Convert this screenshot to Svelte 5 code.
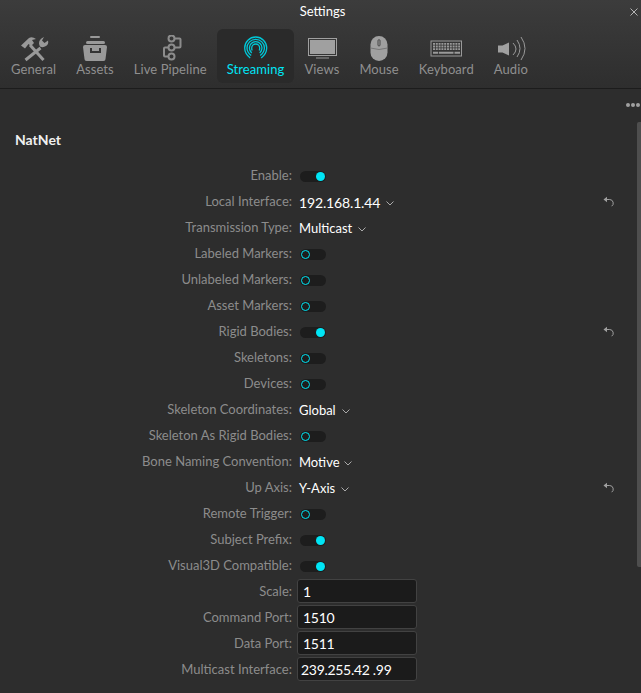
<script lang="ts">
	type Row = {
		label: string;
		kind: 'toggle' | 'select' | 'input';
		on?: boolean;
		value?: string;
		reset?: boolean;
		tight?: boolean;
		num?: boolean;
	};

	const tabs = ['General', 'Assets', 'Live Pipeline', 'Streaming', 'Views', 'Mouse', 'Keyboard', 'Audio'];
	const active = 'Streaming';

	const rows: Row[] = [
		{ label: 'Enable', kind: 'toggle', on: true },
		{ label: 'Local Interface', kind: 'select', value: '192.168.1.44', reset: true, num: true },
		{ label: 'Transmission Type', kind: 'select', value: 'Multicast' },
		{ label: 'Labeled Markers', kind: 'toggle' },
		{ label: 'Unlabeled Markers', kind: 'toggle' },
		{ label: 'Asset Markers', kind: 'toggle' },
		{ label: 'Rigid Bodies', kind: 'toggle', on: true, reset: true },
		{ label: 'Skeletons', kind: 'toggle' },
		{ label: 'Devices', kind: 'toggle' },
		{ label: 'Skeleton Coordinates', kind: 'select', value: 'Global' },
		{ label: 'Skeleton As Rigid Bodies', kind: 'toggle' },
		{ label: 'Bone Naming Convention', kind: 'select', value: 'Motive', tight: true },
		{ label: 'Up Axis', kind: 'select', value: 'Y-Axis', reset: true },
		{ label: 'Remote Trigger', kind: 'toggle' },
		{ label: 'Subject Prefix', kind: 'toggle', on: true },
		{ label: 'Visual3D Compatible', kind: 'toggle', on: true },
		{ label: 'Scale', kind: 'input', value: '1' },
		{ label: 'Command Port', kind: 'input', value: '1510' },
		{ label: 'Data Port', kind: 'input', value: '1511' },
		{ label: 'Multicast Interface', kind: 'input', value: '239.255.42 .99', tight: true }
	];
</script>

<div class="window">
	<header class="top">
		<div class="title">Settings</div>
		<svg class="close" width="8" height="8" viewBox="0 0 8 8" aria-hidden="true">
			<path d="M.5.500l7 7M7.500.500l-7 7" stroke="#b4b4b4" stroke-width="1" fill="none" />
		</svg>
		<nav class="tabs">
			{#each tabs as tab}
				<div class="tab" class:active={tab === active}>
					<svg class="icon" width="36" height="28" viewBox="0 0 36 28" aria-hidden="true">
						{#if tab === 'General'}
							<path d="M5 10.500L13 3q3-2 7 1l-4 1 2 3-3 3-2.500-2L9 13.500z" fill="#999" />
							<path d="M14 10l13.500 15" stroke="#999" stroke-width="3" fill="none" />
							<path d="M24.500 13L9.500 25" stroke="#999" stroke-width="3" fill="none" />
							<path d="M28 2l-2 3.500L28.500 8 32 5.500q1 3.500-2 5.500-3 2-6 .5-2-3.500 0-6.500 1.500-2 4-3z" fill="#999" />
						{:else if tab === 'Assets'}
							<rect x="13" y="1" width="10" height="2" rx="1" fill="#999" />
							<rect x="9" y="6" width="19" height="3" rx="1.500" fill="#999" />
							<path d="M8 10h20a2 2 0 0 1 2 2l-1.500 12a2 2 0 0 1-2 2h-17a2 2 0 0 1-2-2L6 12a2 2 0 0 1 2-2z" fill="#999" />
							<path d="M14 13v4h9v-4" stroke="#333" stroke-width="2" fill="none" />
						{:else if tab === 'Live Pipeline'}
							<g fill="none" stroke="#8c8c8c" stroke-width="2">
								<circle cx="19.500" cy="3.500" r="3" />
								<circle cx="19.500" cy="12.500" r="3" />
								<circle cx="19.500" cy="21.500" r="3" />
								<path d="M22.500 3.500h5a1 1 0 0 1 1 1v7a1 1 0 0 1-1 1h-5M16.500 12.500H13a1 1 0 0 0-1 1v7a1 1 0 0 0 1 1h3.500" />
							</g>
						{:else if tab === 'Streaming'}
							<g fill="none" stroke="#00c8d8" stroke-width="1.300" transform="translate(-.3 -1)">
								<path d="M12.500 24C10 22 7 19 7 14a11 11 0 0 1 22 0c0 5-3 8-5.500 10" />
								<path d="M13.500 21.500C11.500 20 9.300 18 9.300 14a8.700 8.700 0 0 1 17.400 0c0 4-2.200 6-4.200 7.500" />
								<path d="M14 19C13 18 11.700 16.500 11.700 14a6.300 6.300 0 0 1 12.600 0c0 2.500-1.300 4-2.300 5" />
								<path d="M14.500 16.500C14.200 16 14 15 14 14a4 4 0 0 1 8 0c0 1-.2 2-.5 2.500" />
							</g>
						{:else if tab === 'Views'}
							<rect x="4.500" y="3.500" width="28" height="17" fill="none" stroke="#a0a0a0" stroke-width="1" />
							<rect x="6" y="5" width="25" height="14" fill="#a0a0a0" />
							<rect x="12" y="22.500" width="13" height="1" fill="#999" />
						{:else if tab === 'Mouse'}
							<rect x="9.500" y="1" width="17" height="25" rx="8.500" fill="#a0a0a0" />
							<path d="M9.500 13q8.500 3 17 0" stroke="#777" stroke-width="1" fill="none" />
							<rect x="17" y="4.700" width="2" height="6.300" rx="1" fill="#a0a0a0" stroke="#444" stroke-width="1" />
						{:else if tab === 'Keyboard'}
							<rect x="3" y="6" width="30.500" height="15" fill="none" stroke="#999" stroke-width="1" />
							<path d="M5 8.800h27M5 11.500h27M5 14.200h27" stroke="#999" stroke-width="1.800" stroke-dasharray="2 .8" />
							<path d="M5 17.800h5.200M11 17.800h14.500M26.500 17.800h5.500" stroke="#999" stroke-width="2" />
						{:else}
							<path d="M5 10.500h4.500L16 7.500v13l-6.500-3H5z" fill="#a0a0a0" />
							<g fill="none" stroke="#999" stroke-width="1">
								<path d="M20 8q6 6 0 12" />
								<path d="M24 5q6 8.500 0 17" />
								<path d="M28 2q8 11.500 0 23" />
							</g>
						{/if}
					</svg>
					<span class="tab-label">{tab}</span>
				</div>
			{/each}
		</nav>
	</header>

	<main class="body">
		<div class="dots"><span></span><span></span><span></span></div>
		<div class="scrollbar"></div>
		<h2 class="section">NatNet</h2>
		<div class="rows">
			{#each rows as row}
				<div class="row">
					<span class="label">{row.label}:</span>
					<div class="control">
						{#if row.kind === 'toggle'}
							<span class="toggle" class:on={row.on}><span class="knob"></span></span>
						{:else if row.kind === 'select'}
							<span class="select" class:tight={row.tight}>
								<span class="value" class:num={row.num}>{row.value}</span>
								<svg class="chevron" width="8" height="5" viewBox="0 0 8 5" aria-hidden="true">
									<path d="M.5.500L4 4 7.500.500" stroke="#aaa" stroke-width="1" fill="none" />
								</svg>
							</span>
						{:else}
							<span class="input" class:tight={row.tight}>{row.value}</span>
						{/if}
					</div>
					{#if row.reset}
						<svg class="reset" width="12" height="12" viewBox="0 0 12 12" aria-hidden="true">
							<path d="M.5 3.500L4 .800v5.400z" fill="#a0a0a0" />
							<path d="M3.500 3.500h3.200a3.700 3.700 0 0 1 2 6.700" stroke="#a0a0a0" stroke-width="1" fill="none" />
						</svg>
					{/if}
				</div>
			{/each}
		</div>
	</main>
</div>

<style>
	:global(body) {
		margin: 0;
		background: #2d2d2d;
	}

	.window {
		width: 641px;
		height: 693px;
		overflow: hidden;
		background: #2d2d2d;
		font-family: Lato, "Open Sans", sans-serif;
		font-size: 13px;
		color: #fff;
	}

	.top {
		position: relative;
		box-sizing: border-box;
		height: 89px;
		padding-top: 2px;
		background: linear-gradient(#3c3c3c, #2e2e2e);
		border-bottom: 1px solid #1c1c1c;
	}

	.title {
		height: 18px;
		padding-left: 4px;
		line-height: 18px;
		text-align: center;
		color: #fff;
	}

	.close {
		position: absolute;
		top: 8px;
		right: 3px;
	}

	.tabs {
		display: flex;
		margin: 9px 0 0 1px;
	}

	.tab {
		display: flex;
		flex-direction: column;
		align-items: center;
		height: 54px;
		padding: 0 10px;
		border-radius: 6px;
		box-sizing: border-box;
		color: #8f8f8f;
	}

	.tab.active {
		background: #2a2a2a;
		color: #00e5f5;
	}

	.icon {
		flex: none;
		margin: 6px -4px -3px;
	}

	.tab-label {
		line-height: 18px;
		letter-spacing: 0.08px;
		white-space: nowrap;
	}

	.body {
		position: relative;
		height: 604px;
	}

	.dots {
		position: absolute;
		top: 14px;
		right: 1px;
		display: flex;
		gap: 1px;
	}

	.dots span {
		width: 4px;
		height: 4px;
		border-radius: 50%;
		background: #a0a0a0;
	}

	.scrollbar {
		position: absolute;
		top: 33px;
		right: 0;
		width: 4px;
		height: 445px;
		border-radius: 2px 0 0 2px;
		background: #4e4e4e;
	}

	.section {
		margin: 0;
		padding: 42px 0 0 15px;
		font-size: 14px;
		line-height: 17px;
		font-weight: 700;
		color: #f0f0f0;
	}

	.rows {
		margin-top: 15px;
	}

	.row {
		position: relative;
		display: flex;
		align-items: center;
		height: 26px;
	}

	.label {
		box-sizing: border-box;
		width: 292px;
		flex: none;
		padding-bottom: 2px;
		text-align: right;
		color: #8c8c8c;
		white-space: nowrap;
	}

	.control {
		display: flex;
		align-items: center;
		padding-left: 7px;
	}

	.toggle {
		position: relative;
		display: block;
		width: 26px;
		height: 11px;
		margin: 1px 0 0 1px;
		border-radius: 6px;
		background: #1d1d1d;
	}

	.knob {
		position: absolute;
		top: 1px;
		left: 0.7px;
		box-sizing: border-box;
		width: 9px;
		height: 9px;
		border-radius: 50%;
		border: 1.500px solid #00e5f5;
		background: #1d1d1d;
	}

	.toggle.on .knob {
		left: 15.7px;
		background: #00e5f5;
		border: none;
	}

	.select {
		display: flex;
		align-items: center;
		gap: 6px;
		color: #fff;
	}

	.select.tight {
		gap: 4px;
	}

	.value.num {
		font-size: 14px;
		letter-spacing: -0.15px;
	}

	.chevron {
		margin-top: 3px;
	}

	.input {
		box-sizing: border-box;
		width: 120px;
		height: 24px;
		margin: -2px 0 0 -2px;
		padding-left: 5px;
		font-size: 14px;
		letter-spacing: -0.3px;
		line-height: 24px;
		background: #1b1b1b;
		border: 1px solid #424242;
		border-radius: 3px;
		color: #fff;
	}

	.input.tight {
		padding-left: 3px;
	}

	.reset {
		position: absolute;
		left: 603px;
		top: 7px;
	}
</style>
